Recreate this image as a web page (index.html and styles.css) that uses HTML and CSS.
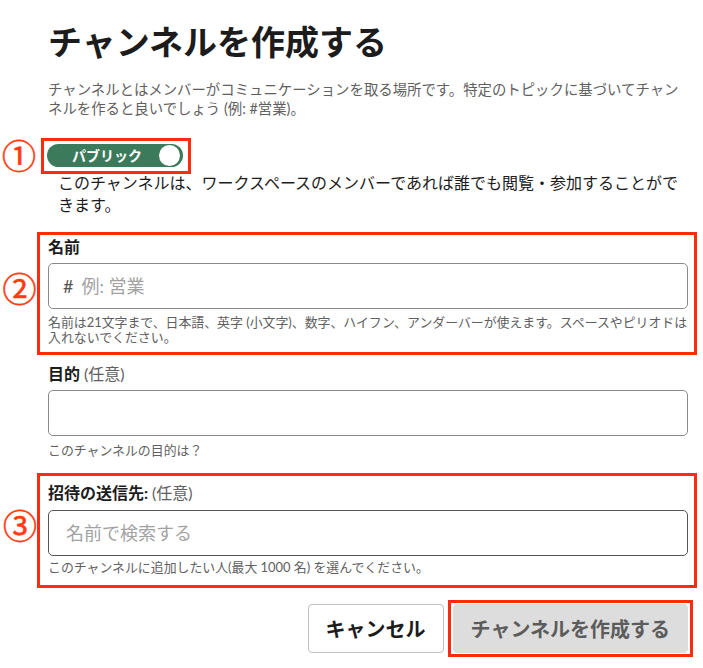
FILE: index.html
```html
<!DOCTYPE html>
<html lang="ja">
<head>
<meta charset="utf-8">
<title>チャンネルを作成する</title>
<link rel="stylesheet" href="styles.css">
</head>
<body>
<main class="modal">
  <h1 class="title">チャンネルを作成する</h1>
  <p class="desc">チャンネルとはメンバーがコミュニケーションを取る場所です。特定のトピックに基づいてチャンネルを作ると良いでしょう (例: #営業)。</p>

  <div class="annot annot-toggle">
    <span class="marker marker-1">①</span>
    <div class="toggle">
      <span class="toggle-label">パブリック</span>
      <span class="knob"></span>
    </div>
  </div>
  <p class="toggle-info">このチャンネルは、ワークスペースのメンバーであれば誰でも閲覧・参加することができます。</p>

  <section class="field annot annot-field field-name">
    <span class="marker marker-2">②</span>
    <label class="label" for="name">名前</label>
    <div class="input-box">
      <span class="hash">#</span>
      <input id="name" class="input" type="text" placeholder="例: 営業">
    </div>
    <p class="hint">名前は21文字まで、日本語、英字 (小文字)、数字、ハイフン、アンダーバーが使えます。スペースやピリオドは入れないでください。</p>
  </section>

  <section class="field field-purpose">
    <label class="label" for="purpose">目的 <span class="optional">(任意)</span></label>
    <div class="input-box">
      <input id="purpose" class="input" type="text">
    </div>
    <p class="hint">このチャンネルの目的は？</p>
  </section>

  <section class="field annot annot-field field-invite">
    <span class="marker marker-3">③</span>
    <label class="label" for="invite">招待の送信先: <span class="optional">(任意)</span></label>
    <div class="input-box input-dark">
      <input id="invite" class="input" type="text" placeholder="名前で検索する">
    </div>
    <p class="hint">このチャンネルに追加したい人(最大 1000 名) を選んでください。</p>
  </section>

  <div class="actions">
    <button class="btn btn-cancel" type="button">キャンセル</button>
    <div class="annot annot-button">
      <button class="btn btn-create" type="button">チャンネルを作成する</button>
    </div>
  </div>
</main>
</body>
</html>
```

FILE: styles.css
```css
* {
  box-sizing: border-box;
}

html, body {
  margin: 0;
  padding: 0;
  background: #ffffff;
}

body {
  font-family: Lato, "Noto Sans CJK JP", sans-serif;
  color: #1d1c1d;
  width: 703px;
  height: 668px;
  overflow: hidden;
}

.modal {
  padding: 22px 15px 0 48px;
  display: flex;
  flex-direction: column;
  align-items: stretch;
}

.title {
  margin: 0;
  font-size: 34px;
  line-height: 40px;
  font-weight: 700;
  color: #1d1c1d;
  white-space: nowrap;
}

.desc {
  margin: 17.5px 0 0;
  font-size: 14.4px;
  line-height: 19px;
  color: #616061;
}

/* annotation frames */
.annot {
  position: relative;
  border: 3px solid #ff2b0d;
}

.marker {
  position: absolute;
  width: 34px;
  font-family: "Noto Sans CJK JP", sans-serif;
  font-size: 34px;
  line-height: 34px;
  text-align: center;
  color: #ff3a10;
  -webkit-text-stroke: 0.6px #ff3a10;
}

.marker-1 {
  left: -42px;
  top: -3px;
}

.marker-2 {
  left: -37.5px;
  top: 36px;
}

.marker-3 {
  left: -37px;
  top: 32px;
}

.annot-toggle {
  align-self: flex-start;
  margin: 20.5px 0 0 -7px;
  padding: 3px 5px 4px 3px;
}

.toggle {
  width: 136px;
  height: 23px;
  border-radius: 12px;
  background: #3b7a5a;
  display: flex;
  align-items: center;
  justify-content: space-between;
  padding: 0 3px 0 25px;
}

.toggle-label {
  color: #ffffff;
  font-size: 14px;
  font-weight: 700;
  line-height: 23px;
  white-space: nowrap;
}

.knob {
  width: 21px;
  height: 21px;
  border-radius: 50%;
  background: #ffffff;
}

.toggle-info {
  margin: -2px 0 0;
  padding-left: 10px;
  font-size: 16px;
  line-height: 22px;
  color: #1d1c1d;
}

/* fields */
.field {
  display: flex;
  flex-direction: column;
}

.annot-field {
  margin-left: -11px;
  margin-right: -9px;
  padding-left: 8px;
  padding-right: 6px;
}

.field-name {
  margin-top: 16px;
  padding-top: 2px;
  padding-bottom: 7px;
}

.field-purpose {
  margin-top: 9px;
}

.field-invite {
  margin-top: 15.5px;
  padding-top: 7px;
  padding-bottom: 10px;
}

.label {
  font-size: 16px;
  line-height: 20px;
  font-weight: 700;
  color: #1d1c1d;
}

.optional {
  font-weight: 400;
  color: #616061;
}

.input-box {
  margin-top: 6px;
  height: 46px;
  border: 1px solid #8a8a8a;
  border-radius: 5px;
  display: flex;
  align-items: center;
  padding: 0 14px;
}

.field-invite .input-box {
  margin-top: 7px;
  padding-left: 17px;
}

.input-dark {
  border-color: #555555;
}

.hash {
  font-size: 18px;
  color: #555555;
  margin-right: 8px;
}

.input {
  flex: 1;
  min-width: 0;
  border: none;
  outline: none;
  background: transparent;
  padding: 0;
  font-family: Lato, "Noto Sans CJK JP", sans-serif;
  font-size: 18px;
  color: #1d1c1d;
}

.input::placeholder {
  color: #a2a2a2;
}

.hint {
  margin: 6px 0 0;
  font-size: 12.9px;
  line-height: 15px;
  color: #616061;
}

.field-purpose .hint {
  margin-top: 6.5px;
}

.field-invite .hint {
  margin-top: 4px;
}

/* actions */
.actions {
  margin-top: 12px;
  margin-right: -5px;
  display: flex;
  justify-content: flex-end;
  align-items: center;
  gap: 4px;
}

.btn {
  height: 49px;
  padding: 0 17px;
  border-radius: 4px;
  font-family: Lato, "Noto Sans CJK JP", sans-serif;
  font-size: 20px;
  font-weight: 700;
  white-space: nowrap;
  cursor: pointer;
}

.btn-cancel {
  background: #ffffff;
  border: 1px solid #bdbdbd;
  color: #1d1c1d;
}

.annot-button {
  padding: 1px 2px;
}

.btn-create {
  display: block;
  background: #dddddd;
  border: 1px solid #dddddd;
  color: #5c5c5c;
}
```
